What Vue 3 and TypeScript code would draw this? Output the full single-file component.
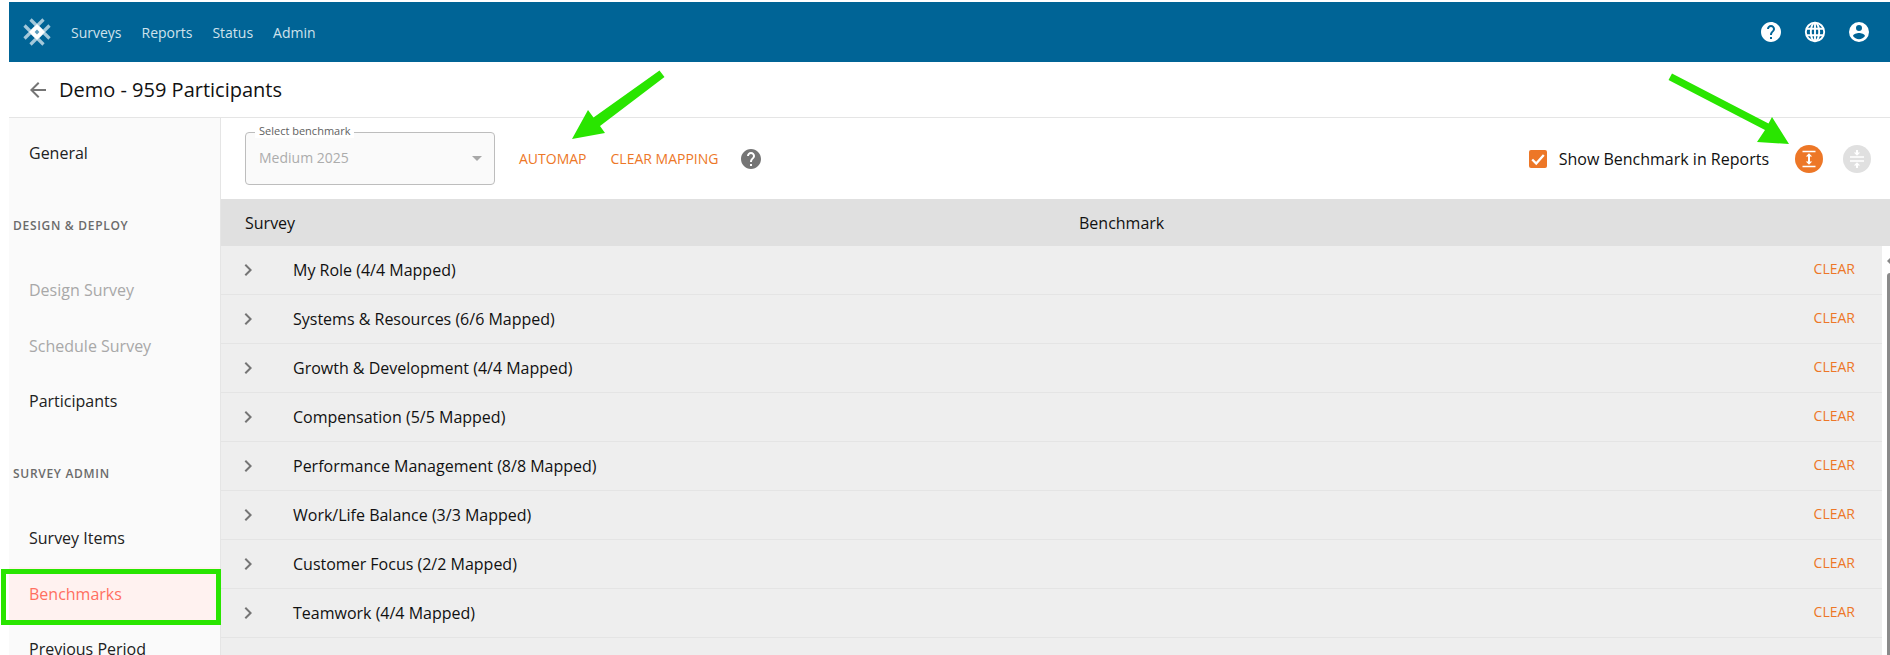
<script setup lang="ts">
interface NavEntry { label: string; kind?: 'section' | 'muted' | 'active' }

const topLinks: string[] = ['Surveys', 'Reports', 'Status', 'Admin']
const side: NavEntry[] = [
  { label: 'General' },
  { label: 'DESIGN & DEPLOY', kind: 'section' },
  { label: 'Design Survey', kind: 'muted' },
  { label: 'Schedule Survey', kind: 'muted' },
  { label: 'Participants' },
  { label: 'SURVEY ADMIN', kind: 'section' },
  { label: 'Survey Items' },
  { label: 'Benchmarks', kind: 'active' },
  { label: 'Previous Period' },
]
const rows: string[] = [
  'My Role (4/4 Mapped)',
  'Systems & Resources (6/6 Mapped)',
  'Growth & Development (4/4 Mapped)',
  'Compensation (5/5 Mapped)',
  'Performance Management (8/8 Mapped)',
  'Work/Life Balance (3/3 Mapped)',
  'Customer Focus (2/2 Mapped)',
  'Teamwork (4/4 Mapped)',
]
const helpPath = 'M12 2C6.48 2 2 6.48 2 12s4.48 10 10 10 10-4.48 10-10S17.52 2 12 2zm1 17h-2v-2h2v2zm2.07-7.75l-.9.92C13.45 12.9 13 13.5 13 15h-2v-.5c0-1.1.45-2.1 1.17-2.83l1.24-1.26c.37-.36.59-.86.59-1.41 0-1.1-.9-2-2-2s-2 .9-2 2H8c0-2.21 1.79-4 4-4s4 1.79 4 4c0 .88-.36 1.68-.93 2.25z'
</script>

<template>
  <div class="page">
    <header class="topbar">
      <svg class="logo" viewBox="0 0 28 28" width="28" height="28">
        <g stroke="#a3c8da" stroke-width="3.2" fill="none">
          <path d="M1.5 7.5 L20.5 26.5 M7.5 1.5 L26.5 20.5 M1.5 20.5 L20.5 1.5 M7.5 26.5 L26.5 7.5" />
        </g>
        <path d="M14 6 L22 14 L14 22 L6 14 Z" fill="#fff" />
        <path d="M14 11.6 L16.4 14 L14 16.4 L11.6 14 Z" fill="#5d9dbd" />
      </svg>
      <nav class="links">
        <a v-for="l in topLinks" :key="l" class="link">{{ l }}</a>
      </nav>
      <div class="top-icons">
        <svg viewBox="0 0 24 24" width="24" height="24"><path :d="helpPath" fill="#fff" /></svg>
        <svg viewBox="0 0 24 24" width="24" height="24" fill="none" stroke="#fff" stroke-width="1.9">
          <circle cx="12" cy="12" r="9.2" />
          <ellipse cx="12" cy="12" rx="4.2" ry="9.2" />
          <path d="M12 3v18M3.2 8.8h17.6M3.2 15.2h17.6" />
        </svg>
        <svg viewBox="0 0 24 24" width="24" height="24"><path fill="#fff" d="M12,19.2C9.5,19.2 7.29,17.92 6,16C6.03,14 10,12.9 12,12.9C14,12.9 17.97,14 18,16C16.71,17.92 14.5,19.2 12,19.2M12,5A3,3 0 0,1 15,8A3,3 0 0,1 12,11A3,3 0 0,1 9,8A3,3 0 0,1 12,5M12,2A10,10 0 0,0 2,12A10,10 0 0,0 12,22A10,10 0 0,0 22,12A10,10 0 0,0 12,2Z" /></svg>
      </div>
    </header>

    <div class="titlebar">
      <svg viewBox="0 0 24 24" width="24" height="24" class="back"><path fill="#757575" d="M20 11H7.83l5.59-5.59L12 4l-8 8 8 8 1.41-1.41L7.83 13H20v-2z" /></svg>
      <h1 class="title">Demo - 959 Participants</h1>
    </div>

    <div class="body">
      <aside class="sidebar">
        <div
          v-for="s in side"
          :key="s.label"
          :class="s.kind === 'section' ? 'section' : ['item', s.kind]"
        >{{ s.label }}</div>
      </aside>

      <main class="main">
        <div class="toolbar">
          <div class="select">
            <span class="select-label">Select benchmark</span>
            <span class="select-value">Medium 2025</span>
            <span class="caret"></span>
          </div>
          <a class="action first">AUTOMAP</a>
          <a class="action">CLEAR MAPPING</a>
          <svg class="tool-help" viewBox="2 2 20 20" width="20" height="20"><path :d="helpPath" fill="#757575" /></svg>
          <div class="spacer"></div>
          <span class="check">
            <svg viewBox="0 0 18 18" width="16" height="16" fill="none" stroke="#fff" stroke-width="2.6"><path d="M2.5 9.5 L7 14 L15.5 4.5" /></svg>
          </span>
          <span class="check-label">Show Benchmark in Reports</span>
          <button class="round on" type="button">
            <svg viewBox="0 0 28 28" width="28" height="28" fill="none" stroke="#fff">
              <path d="M7.5 6.5h13M7.5 21.5h13" stroke-width="1.5" />
              <path d="M14 10v8" stroke-width="2" />
              <path d="M10.8 11.4 14 8.2l3.2 3.2zM10.8 16.6 14 19.8l3.2-3.2z" fill="#fff" stroke="none" />
            </svg>
          </button>
          <button class="round off" type="button">
            <svg viewBox="0 0 28 28" width="28" height="28" fill="none" stroke="#fff">
              <path d="M7 12h14M7 16h14" stroke-width="1.5" />
              <path d="M14 5v3.5M14 19.5V23" stroke-width="2" />
              <path d="M10.8 7.5 14 10.7l3.2-3.2zM10.8 20.5 14 17.3l3.2 3.2z" fill="#fff" stroke="none" />
            </svg>
          </button>
        </div>

        <div class="thead">
          <span class="th-survey">Survey</span>
          <span>Benchmark</span>
        </div>

        <div class="tbody">
          <div class="list">
            <div v-for="r in rows" :key="r" class="row">
              <svg class="chev" viewBox="0 0 24 24" width="24" height="24"><path fill="#757575" d="M8.59 16.59 13.17 12 8.59 7.41 10 6l6 6-6 6z" /></svg>
              <span class="row-label">{{ r }}</span>
              <a class="clear">CLEAR</a>
            </div>
            <div class="row"></div>
          </div>
          <div class="scroll">
            <span class="scroll-arrow"></span>
            <span class="scroll-thumb"></span>
          </div>
        </div>
      </main>
    </div>

    <div class="highlight"></div>
    <svg class="arrows" width="1890" height="655" viewBox="0 0 1890 655">
      <g fill="#29e500" stroke="none">
        <path d="M659.5 70.5 L664.5 77 L600 126 L605 133 L572 139 L588 110 L593.5 117.5 Z" />
        <path d="M1672 73.5 L1668.5 80 L1765 130 L1757 142 L1789 144 L1772 117 L1768.5 123.5 Z" />
      </g>
    </svg>
  </div>
</template>

<style>
html, body { margin: 0; background: #fff; overflow: hidden; }
</style>

<style scoped>
.page {
  position: relative;
  height: 655px;
  padding: 2px 0 0 9px;
  box-sizing: border-box;
  overflow: hidden;
  display: flex;
  flex-direction: column;
  font-family: "Open Sans", "Noto Sans", sans-serif;
  color: #212121;
  background: #fff;
}
.topbar {
  flex: none;
  height: 60px;
  background: #006496;
  display: flex;
  align-items: center;
  padding-left: 14px;
}
.logo { flex: none; }
.links { display: flex; gap: 20px; margin-left: 20px; }
.link { color: #cfe2ec; font-size: 14px; }
.top-icons {
  margin-left: auto;
  display: flex;
  gap: 20px;
  padding-right: 19px;
}
.titlebar {
  flex: none;
  height: 55px;
  display: flex;
  align-items: center;
  padding-left: 17px;
  border-bottom: 1px solid #e5e5e5;
}
.back { flex: none; }
.title {
  margin: 0 0 0 9px;
  font-size: 20px;
  font-weight: 400;
  color: #111;
}
.body { flex: 1; display: flex; min-height: 0; }
.sidebar {
  flex: none;
  width: 212px;
  box-sizing: border-box;
  padding-top: 8px;
  background: #fafafa;
  border-right: 1px solid #e5e5e5;
}
.item {
  height: 55.5px;
  line-height: 55.5px;
  padding-left: 20px;
  font-size: 16px;
  color: #212121;
  white-space: nowrap;
}
.item.muted { color: #a8a8a8; }
.item.active { background: #fff2f0; color: #ff6f61; }
.section {
  height: 81.5px;
  box-sizing: border-box;
  padding: 34px 0 0 4px;
  font-size: 12px;
  line-height: 20px;
  letter-spacing: 0.7px;
  font-weight: 600;
  color: #6b6b6b;
  white-space: nowrap;
}
.main { flex: 1; min-width: 0; display: flex; flex-direction: column; }
.toolbar {
  flex: none;
  height: 81px;
  display: flex;
  align-items: center;
  padding-left: 24px;
}
.select {
  position: relative;
  flex: none;
  width: 250px;
  height: 53px;
  box-sizing: border-box;
  margin-top: -1px;
  padding: 0 13px 2px;
  display: flex;
  align-items: center;
  justify-content: space-between;
  background: #fafafa;
  border: 1px solid #bdbdbd;
  border-radius: 4px;
}
.select-label {
  position: absolute;
  left: 9px;
  top: -9px;
  padding: 0 4px;
  background: #fff;
  font-size: 11px;
  line-height: 14px;
  color: #616161;
}
.select-value { font-size: 14px; color: #acacac; }
.caret {
  margin-right: -1px;
  margin-top: 2px;
  border-left: 5px solid transparent;
  border-right: 5px solid transparent;
  border-top: 5px solid #a8a8a8;
}
.action { font-size: 14px; color: #ed7727; margin-left: 24px; white-space: nowrap; }
.action.first { margin-left: 24px; }
.tool-help { margin-left: 23px; flex: none; }
.spacer { flex: 1; }
.check {
  flex: none;
  width: 18px;
  height: 18px;
  border-radius: 2px;
  background: #ed7727;
  display: flex;
  align-items: center;
  justify-content: center;
}
.check-label { margin-left: 12px; font-size: 16px; color: #111; white-space: nowrap; }
.round {
  flex: none;
  width: 28px;
  height: 28px;
  padding: 0;
  border: 0;
  border-radius: 50%;
  display: block;
}
.round svg { display: block; }
.round.on { background: #ed7727; margin-left: 26px; }
.round.off { background: #e0e0e0; margin-left: 20px; margin-right: 19px; }
.thead {
  flex: none;
  height: 47px;
  display: flex;
  align-items: center;
  padding-left: 24px;
  background: #e0e0e0;
  font-size: 16px;
  color: #111;
}
.th-survey { width: 834px; }
.tbody { flex: 1; min-height: 0; display: flex; overflow: hidden; }
.list { flex: 1; min-width: 0; }
.row {
  height: 49px;
  box-sizing: border-box;
  display: flex;
  align-items: center;
  padding: 0 27px 0 15px;
  background: #eeeeee;
  border-bottom: 1px solid #e4e4e4;
}
.chev { flex: none; }
.row-label { margin-left: 33px; font-size: 16px; color: #111; }
.clear { margin-left: auto; margin-bottom: 3px; font-size: 14px; color: #ed7727; }
.scroll {
  position: relative;
  flex: none;
  width: 8px;
  background: #fff;
}
.scroll-arrow {
  position: absolute;
  right: 0;
  top: 12px;
  border-right: 3px solid #888;
  border-top: 3px solid transparent;
  border-bottom: 3px solid transparent;
}
.scroll-thumb {
  position: absolute;
  right: 0;
  top: 27px;
  width: 3px;
  bottom: 0;
  background: #8a8a8a;
  border-radius: 3px 0 0 0;
}
.highlight {
  position: absolute;
  left: 1px;
  top: 569px;
  width: 220px;
  height: 56px;
  box-sizing: border-box;
  border: 5px solid #29e500;
  pointer-events: none;
}
.arrows { position: absolute; left: 0; top: 0; pointer-events: none; }
</style>
